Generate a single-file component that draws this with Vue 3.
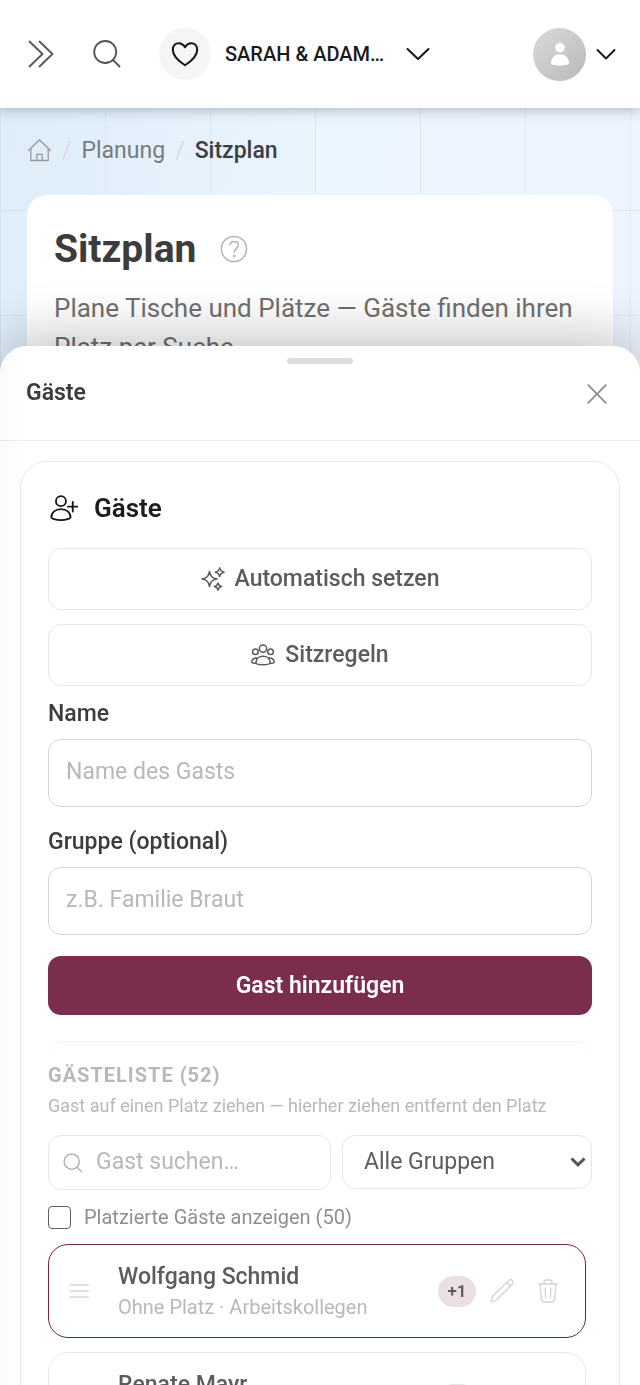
<template>
  <div class="page">
    <header class="topbar">
      <button class="icon-button" type="button" aria-label="Menü öffnen">
        <svg class="icon-lg" viewBox="0 0 32 32" fill="none" stroke="#555" stroke-width="1.8" stroke-linecap="round" stroke-linejoin="round">
          <path d="M4.500 3.500 17.500 16 4.500 28.500M14.500 3.500 27.500 16 14.500 28.500" />
        </svg>
      </button>
      <button class="icon-button search-button" type="button" aria-label="Suchen">
        <svg class="icon-lg" viewBox="0 0 32 32" fill="none" stroke="#555" stroke-width="1.8" stroke-linecap="round">
          <circle cx="14.200" cy="14" r="11" />
          <path d="m22 22 6.500 6.500" />
        </svg>
      </button>
      <button class="event-switch" type="button">
        <span class="event-icon">
          <svg viewBox="0 0 32 32" fill="none" stroke="#161616" stroke-width="2.200" stroke-linejoin="round">
            <path d="M16 28C11 24.800 3 18.500 3 11.500 3 7.200 5.800 4.500 9.300 4.500c3 0 5.200 1.600 6.700 4.300 1.500-2.700 3.700-4.300 6.700-4.300 3.500 0 6.300 2.700 6.300 7C29 18.500 21 24.800 16 28Z" />
          </svg>
        </span>
        <span class="event-name">SARAH &amp; ADAM…</span>
        <svg class="event-chevron" viewBox="0 0 24 24" fill="none" stroke="#161616" stroke-width="2" stroke-linecap="round" stroke-linejoin="round">
          <path d="m1.500 7 10.500 10L22.500 7" />
        </svg>
      </button>
      <button class="account" type="button" aria-label="Konto">
        <span class="avatar">
          <svg viewBox="0 0 24 24" fill="#fff">
            <circle cx="12" cy="5.600" r="4.800" />
            <path d="M3 21.200c0-5.600 4-9 9-9s9 3.400 9 9c0 1.700-5 2.400-9 2.400s-9-.7-9-2.400Z" />
          </svg>
        </span>
        <svg class="account-chevron" viewBox="0 0 20 20" fill="none" stroke="#161616" stroke-width="1.900" stroke-linecap="round" stroke-linejoin="round">
          <path d="m1.500 6 8.500 8.500L18.500 6" />
        </svg>
      </button>
    </header>

    <main class="content">
      <nav class="breadcrumb" aria-label="Breadcrumb">
        <a href="#" class="crumb-home" aria-label="Start">
          <svg viewBox="0 0 24 24" fill="none" stroke="#999" stroke-width="1.300" stroke-linecap="round" stroke-linejoin="round">
            <path d="M1 12.500 12 1.800l11 10.700M3.300 10.800V22.500h17.400V10.800M9.300 22.500v-6.200h5.400v6.200" />
          </svg>
        </a>
        <span class="crumb-sep">/</span>
        <a href="#" class="crumb-link">Planung</a>
        <span class="crumb-sep">/</span>
        <span class="crumb-current">Sitzplan</span>
      </nav>

      <section class="intro">
        <div class="intro-head">
          <h1>Sitzplan</h1>
          <button class="help" type="button" aria-label="Hilfe">
            <svg viewBox="0 0 28 28" fill="none" stroke="#b5b5b5" stroke-width="1.500" stroke-linecap="round">
              <circle cx="14" cy="14" r="12.600" />
              <path d="M10 10c.2-2.300 1.900-3.600 4.200-3.600 2.500 0 4.200 1.500 4.200 3.700 0 3.300-4 3.300-4 6.600v.6" />
              <circle cx="14.300" cy="21" r=".6" fill="#b5b5b5" />
            </svg>
          </button>
        </div>
        <p>Plane Tische und Plätze — Gäste finden ihren Platz per Suche.</p>
      </section>
    </main>

    <aside class="sheet" role="dialog" aria-labelledby="sheet-title">
      <div class="sheet-grip"></div>
      <div class="sheet-head">
        <h2 id="sheet-title">Gäste</h2>
        <button class="close" type="button" aria-label="Schließen">
          <svg viewBox="0 0 20 20" fill="none" stroke="#8c8c8c" stroke-width="1.700" stroke-linecap="round">
            <path d="m1.200 1.200 17.600 17.600M18.800 1.200 1.200 18.800" />
          </svg>
        </button>
      </div>

      <div class="sheet-body">
        <section class="panel">
          <h3 class="panel-title">
            <svg viewBox="0 0 32 32" fill="none" stroke="#161616" stroke-width="2.100" stroke-linecap="round">
              <circle cx="12.500" cy="8.200" r="5.700" />
              <path d="M1.500 26.500c0-5.400 4.900-9.300 11-9.300s11 3.900 11 9.300c0 1.700-5.400 3.300-11 3.300s-11-1.600-11-3.300ZM26 9v11M20.500 14.500h11" />
            </svg>
            Gäste
          </h3>

          <div class="actions">
            <button class="outline-button" type="button">
              <svg viewBox="0 0 24 24" fill="none" stroke="#5c5c5c" stroke-width="1.500" stroke-linejoin="round">
                <path d="M8.500 4.500c1 5 2.500 6.500 7.500 7.500-5 1-6.500 2.500-7.500 7.500C7.500 14.500 6 13 1 12c5-1 6.500-2.500 7.500-7.500Z" />
                <path d="M18.700.8c.6 2.900 1.500 3.800 4.400 4.400-2.900.6-3.800 1.500-4.400 4.400-.6-2.900-1.500-3.800-4.400-4.400 2.900-.6 3.800-1.500 4.400-4.400ZM17 16c.5 2.400 1.200 3.100 3.600 3.600-2.400.5-3.100 1.200-3.600 3.600-.5-2.400-1.200-3.100-3.600-3.600 2.400-.5 3.100-1.200 3.600-3.600Z" />
              </svg>
              <span>Automatisch setzen</span>
            </button>
            <button class="outline-button" type="button">
              <svg viewBox="0 0 24 24" fill="none" stroke="#5c5c5c" stroke-width="1.500" stroke-linecap="round">
                <circle cx="12" cy="5.600" r="3.700" />
                <circle cx="4.400" cy="8.800" r="2.800" />
                <circle cx="19.600" cy="8.800" r="2.800" />
                <path d="M5 19.800c0-4 3-6.500 7-6.500s7 2.500 7 6.500c0 1.200-3.500 2-7 2s-7-.8-7-2ZM5 20.300c-2 0-4.200-.4-4.200-1.300 0-2.500 1.800-4 5-4.100M19 20.300c2 0 4.200-.4 4.200-1.300 0-2.500-1.800-4-5-4.100" />
              </svg>
              <span>Sitzregeln</span>
            </button>
          </div>

          <form class="guest-form" @submit.prevent="addGuest">
            <label for="guest-name">Name</label>
            <input id="guest-name" v-model="name" type="text" placeholder="Name des Gasts" />
            <label for="guest-group">Gruppe (optional)</label>
            <input id="guest-group" v-model="group" type="text" placeholder="z.B. Familie Braut" />
            <button class="primary-button" type="submit">Gast hinzufügen</button>
          </form>

          <div class="guest-list">
            <h4>Gästeliste (52)</h4>
            <p class="hint">Gast auf einen Platz ziehen — hierher ziehen entfernt den Platz</p>

            <div class="filters">
              <label class="search-field">
                <svg viewBox="0 0 20 20" fill="none" stroke="#aaa" stroke-width="1.300" stroke-linecap="round">
                  <circle cx="8.700" cy="8.700" r="7.600" />
                  <path d="m14.200 14.200 4.400 4.400" />
                </svg>
                <input v-model="query" type="text" placeholder="Gast suchen…" aria-label="Gast suchen" />
              </label>
              <div class="select-field">
                <select v-model="selectedGroup" aria-label="Gruppe">
                  <option value="">Alle Gruppen</option>
                  <option v-for="g in groups" :key="g" :value="g">{{ g }}</option>
                </select>
                <svg viewBox="0 0 16 10" fill="none" stroke="#555" stroke-width="3">
                  <path d="m1.500 1.500 6.500 6.300 6.500-6.300" />
                </svg>
              </div>
            </div>

            <label class="show-placed">
              <input v-model="showPlaced" type="checkbox" />
              Platzierte Gäste anzeigen (50)
            </label>

            <ul class="guests">
              <li v-for="guest in visibleGuests" :key="guest.name" class="guest" :class="{ active: guest.name === activeGuest }" @click="activeGuest = guest.name">
                <svg class="drag" viewBox="0 0 20 20" fill="none" stroke="#d6d6d6" stroke-width="1.300" stroke-linecap="round">
                  <path d="M.7 4h18.600M.7 10h18.600M.7 16h18.600" />
                </svg>
                <div class="guest-info">
                  <span class="guest-name">{{ guest.name }}</span>
                  <span class="guest-meta">Ohne Platz · {{ guest.group }}</span>
                </div>
                <span class="plus">+{{ guest.plus }}</span>
                <button class="row-button" type="button" aria-label="Bearbeiten">
                  <svg viewBox="0 0 24 24" fill="none" stroke="#d3d3d3" stroke-width="1.300" stroke-linejoin="round">
                    <path d="M1 23l1.700-5.700L18.600 1.600a2.600 2.600 0 0 1 3.700 3.700L6.500 21 1 23ZM16.800 3.500l3.700 3.700" />
                  </svg>
                </button>
                <button class="row-button" type="button" aria-label="Löschen">
                  <svg viewBox="0 0 24 24" fill="none" stroke="#d3d3d3" stroke-width="1.300" stroke-linecap="round" stroke-linejoin="round">
                    <path d="M2.500 5h19M8 4.800V3.500C8 2 8.800 1 10.300 1h3.400C15.200 1 16 2 16 3.500v1.300M4 5l1.300 15c.1 1.900 1.100 3 2.900 3h7.600c1.800 0 2.800-1.100 2.900-3L20 5M9.200 9l.4 10M14.800 9l-.4 10" />
                  </svg>
                </button>
              </li>
            </ul>
          </div>
        </section>
      </div>
    </aside>
  </div>
</template>

<script setup>
import { ref, computed } from 'vue';

const name = ref('');
const group = ref('');
const query = ref('');
const selectedGroup = ref('');
const showPlaced = ref(false);
const activeGuest = ref('Wolfgang Schmid');

const guests = ref([
  { name: 'Wolfgang Schmid', group: 'Arbeitskollegen', plus: 1 },
  { name: 'Renate Mayr', group: 'Arbeitskollegen', plus: 1 }
]);

const groups = computed(() => [...new Set(guests.value.map(g => g.group))]);

const visibleGuests = computed(() =>
  guests.value.filter(g =>
    g.name.toLowerCase().includes(query.value.toLowerCase()) &&
    (!selectedGroup.value || g.group === selectedGroup.value)
  )
);

const addGuest = () => {
  if (!name.value.trim()) return;
  guests.value.push({ name: name.value, group: group.value, plus: 1 });
  name.value = '';
  group.value = '';
};
</script>

<style>
body {
  margin: 0;
  overflow: hidden;
}
</style>

<style scoped>
.page {
  display: flex;
  flex-direction: column;
  height: 100vh;
  overflow: hidden;
  font-family: Roboto, "Liberation Sans", sans-serif;
  color: #3c3c3c;
}

.page *,
.page *::before {
  box-sizing: border-box;
}

svg {
  display: block;
  flex-shrink: 0;
}

button {
  padding: 0;
  border: none;
  background: none;
  font-family: inherit;
  cursor: pointer;
}

input,
select {
  font-family: inherit;
}

h1, h2, h3, h4, p, ul {
  margin: 0;
}

.topbar {
  position: relative;
  z-index: 1;
  display: flex;
  align-items: center;
  height: 108px;
  flex-shrink: 0;
  padding: 0 24px 0 25px;
  background: #fff;
  box-shadow: 0 2px 12px rgba(0, 0, 0, 0.25);
}

.icon-lg {
  width: 32px;
  height: 32px;
}

.search-button {
  margin-left: 34px;
}

.event-switch {
  display: flex;
  align-items: center;
  margin-left: 36px;
}

.event-icon {
  display: flex;
  align-items: center;
  justify-content: center;
  width: 52px;
  height: 52px;
  border-radius: 50%;
  background: #f5f5f5;
}

.event-icon svg {
  width: 30px;
  height: 30px;
}

.event-name {
  margin-left: 14px;
  font-size: 20px;
  font-weight: 500;
  color: #1a1a1a;
}

.event-chevron {
  width: 24px;
  height: 24px;
  margin-left: 22px;
}

.account {
  display: flex;
  align-items: center;
  gap: 10px;
  margin-left: auto;
}

.avatar {
  display: flex;
  align-items: center;
  justify-content: center;
  width: 53px;
  height: 53px;
  border-radius: 50%;
  background: linear-gradient(135deg, #dadada, #b9b9b9);
}

.avatar svg {
  width: 24px;
  height: 24px;
}

.account-chevron {
  width: 20px;
  height: 20px;
}

.content {
  flex: 1;
  padding: 24px 27px;
  background:
    repeating-linear-gradient(90deg, rgba(70, 100, 140, 0.08) 0 1px, transparent 1px 105px),
    repeating-linear-gradient(180deg, transparent 0 102px, rgba(70, 100, 140, 0.08) 102px 103px, transparent 103px 105px),
    linear-gradient(100deg, #deedf9, #ebf5fe 40%, #edf4fd 75%, #e8f0f9);
}

.breadcrumb {
  display: flex;
  align-items: center;
  gap: 10px;
  height: 36px;
  font-size: 23px;
}

.crumb-home svg {
  width: 25px;
  height: 24px;
}

.crumb-sep {
  color: #d8dcdf;
}

.crumb-link {
  color: #777c80;
  text-decoration: none;
}

.crumb-current {
  font-weight: 500;
  color: #3c3f42;
}

.intro {
  margin-top: 27px;
  padding: 30px 27px;
  border-radius: 20px;
  background: #fff;
}

.intro-head {
  display: flex;
  align-items: center;
  gap: 24px;
}

h1 {
  font-size: 39px;
  line-height: 48px;
  font-weight: 700;
}

.help svg {
  width: 28px;
  height: 28px;
}

.intro p {
  margin-top: 16px;
  font-size: 26px;
  line-height: 39px;
  color: #707070;
}

.sheet {
  position: fixed;
  z-index: 2;
  right: 0;
  bottom: 0;
  left: 0;
  display: flex;
  flex-direction: column;
  height: 75vh;
  overflow: hidden;
  border-radius: 27px 27px 0 0;
  background: linear-gradient(90deg, #fafafa, #fff 24px);
  box-shadow: 0 -12px 52px rgba(0, 0, 0, 0.22);
}

.sheet-grip {
  flex-shrink: 0;
  align-self: center;
  width: 66px;
  height: 6px;
  margin-top: 12px;
  border-radius: 3px;
  background: #dcdcdc;
}

.sheet-head {
  display: flex;
  align-items: flex-start;
  justify-content: space-between;
  flex-shrink: 0;
  height: 77px;
  padding: 15px 33px 0 26px;
  border-bottom: 1px solid #ececec;
}

h2 {
  font-size: 23px;
  line-height: 28px;
  font-weight: 600;
}

.close {
  padding-top: 5px;
}

.close svg {
  width: 20px;
  height: 20px;
}

.sheet-body {
  flex: 1;
  min-height: 0;
  overflow: hidden;
  padding: 20px;
}

.panel {
  padding: 27px;
  border: 1px solid #e8e8e8;
  border-radius: 27px;
  background: #fff;
  box-shadow: 0 1px 3px rgba(0, 0, 0, 0.05);
}

.panel-title {
  display: flex;
  align-items: center;
  gap: 16px;
  height: 38px;
  padding-left: 2px;
  font-size: 26px;
  font-weight: 600;
  color: #1c1c1c;
}

.panel-title svg {
  width: 28px;
  height: 28px;
}

.actions {
  display: grid;
  gap: 14px;
  margin-top: 21px;
}

.outline-button {
  display: flex;
  align-items: center;
  justify-content: center;
  gap: 10px;
  height: 62px;
  border: 1px solid #e6e6e6;
  border-radius: 13px;
  font-size: 23px;
  font-weight: 500;
  color: #5c5c5c;
}

.outline-button span {
  padding-bottom: 2px;
}

.outline-button svg {
  width: 24px;
  height: 24px;
}

.guest-form {
  display: flex;
  flex-direction: column;
  margin-top: 14px;
}

.guest-form label {
  margin-bottom: 11px;
  font-size: 23px;
  line-height: 28px;
  font-weight: 500;
}

.guest-form input {
  height: 68px;
  margin-bottom: 21px;
  padding: 0 17px 3px;
  border: 1px solid #d4d4d4;
  border-radius: 13px;
  background: #fff;
  font-size: 23px;
}

input::placeholder {
  color: #b8b8b8;
  opacity: 1;
}

.primary-button {
  height: 59px;
  border-radius: 13px;
  background: #7a2d4c;
  font-size: 23px;
  font-weight: 600;
  color: #fff;
}

.guest-list {
  margin-top: 26px;
  padding-top: 19px;
  border-top: 1px solid #f0f0f0;
  border-radius: 16px;
}

h4 {
  font-size: 20px;
  line-height: 28px;
  font-weight: 700;
  letter-spacing: 1px;
  text-transform: uppercase;
  color: #b8b8b8;
}

.hint {
  margin-top: 4px;
  font-size: 18px;
  line-height: 26px;
  color: #b8b8b8;
}

.filters {
  display: grid;
  grid-template-columns: minmax(0, 283fr) minmax(0, 250fr);
  gap: 11px;
  margin-top: 16px;
}

.search-field {
  display: flex;
  align-items: center;
  gap: 13px;
  height: 55px;
  padding: 0 14px;
  border: 1px solid #e6e6e6;
  border-radius: 13px;
}

.search-field svg {
  width: 20px;
  height: 20px;
}

.search-field input {
  flex: 1;
  min-width: 0;
  padding: 0 0 2px;
  border: none;
  outline: none;
  background: none;
  font-size: 23px;
}

.select-field {
  display: grid;
  align-items: center;
  height: 54px;
}

.select-field select,
.select-field svg {
  grid-area: 1 / 1;
}

.select-field select {
  width: 100%;
  height: 100%;
  padding: 0 21px 2px;
  border: 1px solid #e6e6e6;
  border-radius: 13px;
  background: #fff;
  font-size: 23px;
  color: #5c5c5c;
  appearance: none;
}

.select-field svg {
  justify-self: end;
  width: 16px;
  height: 10px;
  margin-right: 6px;
  pointer-events: none;
}

.show-placed {
  display: flex;
  align-items: center;
  gap: 13px;
  height: 24px;
  margin-top: 15px;
  font-size: 20px;
  color: #8f8f8f;
}

.show-placed input {
  width: 23px;
  height: 23px;
  margin: 0;
  border: 1px solid #5f5f5f;
  border-radius: 4px;
  background: #fff;
  appearance: none;
}

.show-placed input:checked {
  background: #7a2d4c;
}

.guests {
  display: grid;
  gap: 14px;
  margin-top: 15px;
  padding: 0 6px 0 0;
  list-style: none;
}

.guest {
  display: flex;
  align-items: center;
  height: 94px;
  padding: 0 25px 0 20px;
  border: 1px solid #e8e8e8;
  border-radius: 20px;
}

.guest.active {
  border-color: #6e2546;
}

.drag {
  width: 20px;
  height: 20px;
}

.guest-info {
  display: flex;
  flex: 1;
  flex-direction: column;
  min-width: 0;
  margin-left: 29px;
}

.guest-name {
  font-size: 23px;
  line-height: 32px;
  font-weight: 500;
  color: #5c5c5c;
}

.guest-meta {
  font-size: 20px;
  line-height: 28px;
  color: #b8b8b8;
}

.plus {
  width: 38px;
  border-radius: 16px;
  background: #eadfe3;
  font-size: 17px;
  line-height: 31px;
  font-weight: 600;
  text-align: center;
  color: #5c5c5c;
}

.row-button {
  margin-left: 14px;
}

.row-button + .row-button {
  margin-left: 22px;
}

.row-button svg {
  width: 24px;
  height: 24px;
}
</style>
